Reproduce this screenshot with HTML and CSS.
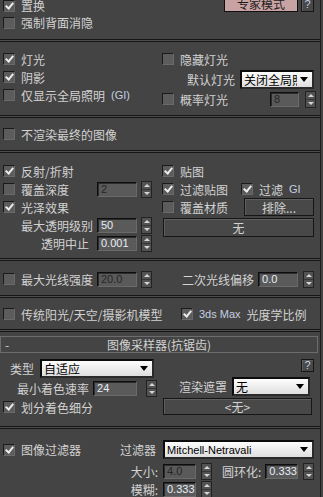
FILE: index.html
```html
<!DOCTYPE html>
<html lang="zh-CN">
<head>
    <meta charset="UTF-8">
    <meta name="viewport" content="width=device-width, initial-scale=1.0">
    <title>全局开关</title>
    <link rel="stylesheet" href="styles.css">
</head>
<body>
<div class="panel">
    <div class="sec s1">
        <div class="row r17">
            <span class="cb"><span class="box on"></span>置换</span>
            <span class="spacer"></span>
            <button class="btn expert">专家模式</button>
            <button class="btn help">?</button>
        </div>
        <div class="row r17"><span class="cb"><span class="box"></span>强制背面消隐</span></div>
    </div>
    <div class="sep"></div>

    <div class="sec s2">
        <div class="col col-l">
            <div class="row"><span class="cb"><span class="box on"></span>灯光</span></div>
            <div class="row"><span class="cb"><span class="box on"></span>阴影</span></div>
            <div class="row"><span class="cb"><span class="box"></span>仅显示全局照明<span class="lat">(GI)</span></span></div>
        </div>
        <div class="col col-r">
            <div class="row"><span class="cb"><span class="box"></span>隐藏灯光</span></div>
            <div class="row r22 deflight">
                <span>默认灯光</span>
                <span class="dd w74"><span class="dd-text">关闭全局照明</span><span class="dd-arrow"></span></span>
            </div>
            <div class="row">
                <span class="cb"><span class="box"></span>概率灯光</span>
                <span class="spacer"></span>
                <span class="spin off w29">8</span><span class="arr gap6"><i></i><i></i></span>
            </div>
        </div>
    </div>
    <div class="sep"></div>

    <div class="sec s3">
        <div class="row"><span class="cb"><span class="box"></span>不渲染最终的图像</span></div>
    </div>
    <div class="sep"></div>

    <div class="sec s4">
        <div class="col col-l">
            <div class="row"><span class="cb"><span class="box on"></span>反射/折射</span></div>
            <div class="row">
                <span class="cell"><span class="cb"><span class="box"></span>覆盖深度</span></span>
                <span class="spin off w40">2</span><span class="arr"><i></i><i></i></span>
            </div>
            <div class="row"><span class="cb"><span class="box on"></span>光泽效果</span></div>
            <div class="row">
                <span class="cell right">最大透明级别</span>
                <span class="spin w40">50</span><span class="arr"><i></i><i></i></span>
            </div>
            <div class="row">
                <span class="cell right pr8">透明中止</span>
                <span class="spin w40">0.001</span><span class="arr"><i></i><i></i></span>
            </div>
        </div>
        <div class="col col-r">
            <div class="row"><span class="cb"><span class="box on"></span>贴图</span></div>
            <div class="row">
                <span class="cb"><span class="box on"></span>过滤贴图</span>
                <span class="cb gi"><span class="box on"></span>过滤 <span class="lat">GI</span></span>
            </div>
            <div class="row">
                <span class="cb"><span class="box"></span>覆盖材质</span>
                <span class="spacer"></span>
                <button class="btn w70">排除...</button>
            </div>
            <button class="btn wide">无</button>
        </div>
    </div>
    <div class="sep"></div>

    <div class="sec s5">
        <div class="col col-l">
            <div class="row">
                <span class="cell"><span class="cb"><span class="box"></span>最大光线强度</span></span>
                <span class="spin off w40">20.0</span><span class="arr"><i></i><i></i></span>
            </div>
        </div>
        <div class="col col-r">
            <div class="row secray">
                <span>二次光线偏移</span>
                <span class="spin w40">0.0</span><span class="arr gap5"><i></i><i></i></span>
            </div>
        </div>
    </div>
    <div class="sep"></div>

    <div class="sec s6">
        <div class="col col-l">
            <div class="row"><span class="cb"><span class="box"></span>传统阳光/天空/摄影机模型</span></div>
        </div>
        <div class="col col-r">
            <div class="row photo"><span class="cb"><span class="box on"></span><span class="lat">3ds Max</span> 光度学比例</span></div>
        </div>
    </div>
    <div class="sep"></div>

    <div class="roll-head">
        <span class="minus">-</span>
        <span class="title">图像采样器(抗锯齿)</span>
    </div>

    <div class="sec s7">
        <div class="col col-l">
            <div class="row r19 type">
                <span>类型</span>
                <span class="dd w114"><span class="dd-text">自适应</span><span class="dd-arrow"></span></span>
            </div>
            <div class="row r20 rate">
                <span>最小着色速率</span>
                <span class="spin w44">24</span><span class="arr gap5"><i></i><i></i></span>
            </div>
            <div class="row"><span class="cb"><span class="box on"></span>划分着色细分</span></div>
        </div>
        <div class="col col-r">
            <button class="btn help small">?</button>
            <div class="row r19 mask">
                <span>渲染遮罩</span>
                <span class="dd w78"><span class="dd-text">无</span><span class="dd-arrow"></span></span>
            </div>
            <button class="btn none">&lt;无&gt;</button>
        </div>
    </div>
    <div class="sep"></div>

    <div class="filters">
        <div class="frow r19">
            <span class="fcell">
                <span class="cb"><span class="box on"></span>图像过滤器</span>
                <span class="spacer"></span>
                <span>过滤器</span>
            </span>
            <span class="dd w151"><span class="dd-text lat-dd">Mitchell-Netravali</span><span class="dd-arrow"></span></span>
        </div>
        <div class="frow">
            <span class="fcell right">大小:</span>
            <span class="spin off w33">4.0</span><span class="arr gap5"><i></i><i></i></span>
            <span class="ring">圆环化:</span>
            <span class="spin w33">0.333</span><span class="arr gap5"><i></i><i></i></span>
        </div>
        <div class="frow">
            <span class="fcell right">模糊:</span>
            <span class="spin w33">0.333</span><span class="arr gap5"><i></i><i></i></span>
        </div>
    </div>
</div>
</body>
</html>
```

FILE: styles.css
```css
body {
    margin: 0;
    background-color: #444444;
    color: #d2d2d2;
    font-family: 'Noto Sans CJK SC', 'Noto Sans', sans-serif;
    font-size: 12px;
    overflow: hidden;
}

.panel {
    width: 320px;
    margin-top: -3px;
    border-right: 1px solid #1e1e1e;
}

.sec {
    display: flex;
}

.col {
    display: flex;
    flex-direction: column;
}

.col-l {
    width: 162px;
    box-sizing: border-box;
    padding-left: 3px;
}

.col-r {
    width: 158px;
    box-sizing: border-box;
    padding-right: 6px;
}

.row {
    height: 18px;
    display: flex;
    align-items: center;
    white-space: nowrap;
}
.r17 { height: 17px; }
.r19 { height: 19px; }
.r20 { height: 20px; }
.r22 { height: 22px; }

.spacer {
    flex: 1;
}

/* section spacing */
.s1 {
    flex-direction: column;
    padding: 0 0 8px 3px;
}
.s2 { padding: 8px 0 7px; }
.s3 { padding: 7px 0 7px 3px; }
.s4 { padding: 9px 0 6px; }
.s5 { padding: 9px 0 7px; }
.s6 { padding: 7px 0 6px; }
.s7 { padding: 0 0 10px; }

.sep {
    height: 1px;
    border-top: 1px solid #161616;
    border-bottom: 1px solid #161616;
    background: #4c4c4c;
}

/* checkbox */
.cb {
    display: inline-flex;
    align-items: center;
    gap: 6px;
}
.box {
    position: relative;
    width: 12px;
    height: 12px;
    box-sizing: border-box;
    border: 1px solid;
    border-color: #1a1a1a #6a6a6a #6a6a6a #1a1a1a;
    background: #5c5c5c;
}
.box.on::after {
    content: "";
    position: absolute;
    left: 3px;
    top: 0;
    width: 3px;
    height: 6px;
    border: solid #ececec;
    border-width: 0 2px 2px 0;
    transform: rotate(40deg);
}

.lat {
    font-family: 'Liberation Sans', Arial, sans-serif;
    font-size: 11px;
    color: #c6cfe2;
}

/* spinners */
.spin {
    height: 15px;
    box-sizing: border-box;
    border: 1px solid;
    border-color: #0e0e0e #6a6a6a #6a6a6a #0e0e0e;
    box-shadow: inset 1px 1px 0 #2c2c2c;
    background: #5a5a5a;
    font-family: 'Liberation Sans', Arial, sans-serif;
    font-size: 11px;
    line-height: 13px;
    color: #e6edf7;
    padding-left: 3px;
}
.spin.off { color: #262626; }
.w29 { width: 29px; }
.w33 { width: 33px; }
.w40 { width: 40px; }
.w44 { width: 44px; }

.arr {
    width: 11px;
    height: 17px;
    box-sizing: border-box;
    margin-left: 4px;
    border: 1px solid #222222;
    background: #525252;
    display: flex;
    flex-direction: column;
}
.arr.gap5 { margin-left: 5px; }
.arr.gap6 { margin-left: 6px; margin-right: -2px; }
.arr i {
    flex: 1;
    display: flex;
    align-items: center;
    justify-content: center;
}
.arr i:first-child {
    border-bottom: 1px solid #363636;
}
.arr i:first-child::before {
    content: "";
    border-left: 3px solid transparent;
    border-right: 3px solid transparent;
    border-bottom: 3px solid #d6d6d6;
}
.arr i:last-child::before {
    content: "";
    border-left: 3px solid transparent;
    border-right: 3px solid transparent;
    border-top: 3px solid #d6d6d6;
}

/* dropdowns */
.dd {
    height: 19px;
    box-sizing: border-box;
    border: 2px solid;
    border-color: #0c0c0c #2a2a2a #2a2a2a #0c0c0c;
    background: linear-gradient(#fdfdfd, #dedede);
    color: #000000;
    display: flex;
    align-items: center;
    padding-left: 2px;
    overflow: hidden;
}
.dd-text {
    flex: 1;
    overflow: hidden;
    white-space: nowrap;
}
.lat-dd {
    font-family: 'Liberation Sans', Arial, sans-serif;
    font-size: 11px;
}
.dd-arrow {
    width: 0;
    height: 0;
    border-left: 4px solid transparent;
    border-right: 4px solid transparent;
    border-top: 5px solid #000000;
    margin: 0 4px 0 3px;
}
.w74 { width: 74px; }
.w78 { width: 78px; }
.w114 { width: 114px; }
.w151 { width: 151px; }

/* buttons */
.btn {
    font: inherit;
    color: #d2d2d2;
    background: #484848;
    border: 1px solid #161616;
    box-shadow: inset 1px 1px 0 #5e5e5e;
    height: 18px;
    padding: 0;
    box-sizing: border-box;
    line-height: 15px;
}
.expert {
    width: 74px;
    height: 16px;
    align-self: flex-start;
    margin-top: -1px;
    background: #c9a3a3;
    color: #1c1c1c;
    box-shadow: none;
    border-color: #101010;
    line-height: 14px;
}
.help {
    width: 13px;
    height: 16px;
    align-self: flex-start;
    margin: -1px 6px 0 3px;
    font-family: 'Liberation Sans', Arial, sans-serif;
    font-size: 11px;
    color: #c6cfe2;
}
.help.small {
    height: 13px;
    margin: 6px 0 0;
    align-self: flex-end;
    line-height: 11px;
}
.w70 { width: 70px; }
.wide {
    width: 151px;
    height: 19px;
    margin: 2px 0 0 1px;
}
.none {
    width: 149px;
    height: 17px;
    margin: 2px 0 0 1px;
    line-height: 14px;
}

/* per-row tweaks */
.deflight {
    padding-left: 25px;
    gap: 5px;
}
.cell {
    width: 94px;
    display: flex;
}
.cell.right {
    justify-content: flex-end;
    padding-right: 4px;
    box-sizing: border-box;
}
.cell.pr8 { padding-right: 8px; }
.gi { margin-left: 13px; }
.secray {
    padding-left: 20px;
    gap: 4px;
}
.secray .arr { margin-left: 1px; }
.photo { padding-left: 19px; }

.roll-head {
    width: 318px;
    height: 17px;
    box-sizing: border-box;
    margin-top: 4px;
    border: 1px solid #6c6c6c;
    display: flex;
    align-items: center;
    position: relative;
}
.minus {
    width: 12px;
    padding-left: 4px;
}
.title {
    flex: 1;
    text-align: center;
    margin-right: 16px;
}

.type {
    margin-top: 6px;
    padding-left: 7px;
    gap: 6px;
}
.rate {
    padding-left: 14px;
    gap: 4px;
}
.mask {
    margin-top: 5px;
    padding-left: 17px;
    gap: 5px;
}

.filters {
    padding: 11px 0 0;
}
.frow {
    height: 18px;
    display: flex;
    align-items: center;
    white-space: nowrap;
}
.frow.r19 {
    height: 19px;
    margin-bottom: 3px;
}
.fcell {
    width: 163px;
    box-sizing: border-box;
    padding: 0 7px 0 3px;
    display: flex;
    align-items: center;
}
.fcell.right {
    justify-content: flex-end;
    padding-right: 5px;
}
.ring {
    margin: 0 4px 0 10px;
}
```
